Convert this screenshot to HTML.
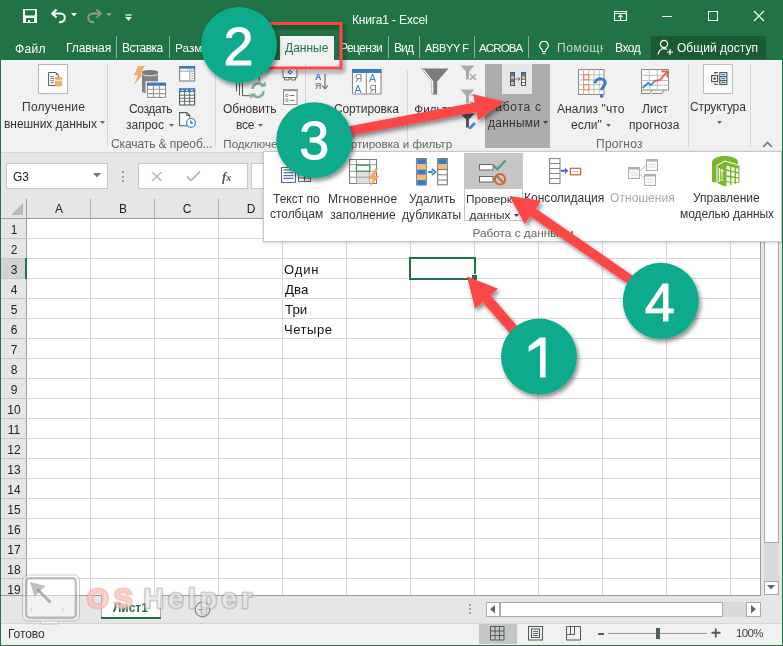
<!DOCTYPE html>
<html><head><meta charset="utf-8"><style>
html,body{margin:0;padding:0;width:783px;height:646px;overflow:hidden;}
body{position:relative;font-family:"Liberation Sans",sans-serif;}
div{position:absolute;}
.t{white-space:nowrap;will-change:transform;}
</style></head><body>
<div style="left:0px;top:0px;width:783px;height:646px;background:#217346"></div>
<div style="left:1px;top:60px;width:781px;height:92px;background:#f1f1f1"></div>
<div style="left:1px;top:152px;width:781px;height:1px;background:#d5d5d5"></div>
<div style="left:1px;top:153px;width:781px;height:46px;background:#e6e6e6"></div>
<div style="left:1px;top:199px;width:760px;height:20px;background:#e6e6e6"></div>
<div style="left:27px;top:219px;width:734px;height:376px;background:#fff"></div>
<div style="left:1px;top:219px;width:26px;height:376px;background:#e6e6e6"></div>
<svg style="position:absolute;left:22px;top:8px;" width="16" height="16" viewBox="0 0 16 16"><rect x="1" y="1" width="14" height="14" fill="#fff"/><path d="M3 2.3h10v4.2l-1 1H4l-1-1z" fill="#217346"/><rect x="4" y="10" width="8" height="4" fill="#217346"/><rect x="6" y="12" width="2" height="2" fill="#fff"/></svg>
<svg style="position:absolute;left:50px;top:7px;" width="18" height="17" viewBox="0 0 18 17"><path d="M3 6.5h7.5a4.3 4.3 0 0 1 0 8.6h-1.5" fill="none" stroke="#fff" stroke-width="2.1"/><path d="M6.5 2.5L2.3 6.5l4.2 4" fill="none" stroke="#fff" stroke-width="2.1"/></svg>
<svg style="position:absolute;left:71px;top:13px;" width="6" height="4" viewBox="0 0 6 4"><path d="M0 0h6L3 3.5z" fill="#fff"/></svg>
<svg style="position:absolute;left:85px;top:7px;" width="18" height="17" viewBox="0 0 18 17"><path d="M15 6.5H7.5a4.3 4.3 0 0 0 0 8.6H9" fill="none" stroke="#8c9a90" stroke-width="2.1"/><path d="M11.5 2.5l4.2 4-4.2 4" fill="none" stroke="#8c9a90" stroke-width="2.1"/></svg>
<svg style="position:absolute;left:106px;top:13px;" width="6" height="4" viewBox="0 0 6 4"><path d="M0 0h6L3 3.5z" fill="#8c9a90"/></svg>
<svg style="position:absolute;left:125px;top:14px;" width="7" height="7" viewBox="0 0 7 7"><path d="M0.5 1h6" stroke="#fff" stroke-width="1.2"/><path d="M0 3h7L3.5 6.8z" fill="#fff"/></svg>
<div class="t" style="left:352.3px;top:14px;font-size:12px;line-height:12px;color:#fff;letter-spacing:-0.154px;">Книга1 - Excel</div>
<svg style="position:absolute;left:613px;top:10px;" width="15" height="12" viewBox="0 0 15 12"><path d="M1.5 1.5h12v9h-12zM1.5 3.5h12" fill="none" stroke="#fff" stroke-width="1.2"/><path d="M7.5 10V5M5.3 7.2l2.2-2.2 2.2 2.2" fill="none" stroke="#fff" stroke-width="1.2"/></svg>
<div style="left:662px;top:16px;width:10px;height:1px;background:#fff"></div>
<div style="left:708px;top:11px;width:10px;height:10px;border:1px solid #fff;box-sizing:border-box"></div>
<svg style="position:absolute;left:753px;top:10px;" width="12" height="12" viewBox="0 0 12 12"><path d="M1 1l10 10M11 1L1 11" stroke="#fff" stroke-width="1.1"/></svg>
<div class="t" style="left:15px;top:43px;font-size:12px;line-height:12px;color:#fff;letter-spacing:0.333px;">Файл</div>
<div class="t" style="left:66px;top:42px;font-size:12px;line-height:12px;color:#fff;letter-spacing:-0.083px;">Главная</div>
<div style="left:116px;top:36px;width:1px;height:22px;background:#8fb29c"></div>
<div style="left:169px;top:36px;width:1px;height:22px;background:#8fb29c"></div>
<div style="left:388px;top:36px;width:1px;height:22px;background:#8fb29c"></div>
<div style="left:419px;top:36px;width:1px;height:22px;background:#8fb29c"></div>
<div style="left:474px;top:36px;width:1px;height:22px;background:#8fb29c"></div>
<div style="left:528px;top:36px;width:1px;height:22px;background:#8fb29c"></div>
<div class="t" style="left:121.5px;top:42px;font-size:12px;line-height:12px;color:#fff;letter-spacing:-0.583px;">Вставка</div>
<div class="t" style="left:174.5px;top:43px;font-size:11.8px;line-height:11.8px;color:#fff;">Размет</div>
<div style="left:280px;top:36px;width:54px;height:24px;background:#f1f1f1"></div>
<div class="t" style="left:285px;top:42px;font-size:12px;line-height:12px;color:#217346;letter-spacing:0.000px;">Данные</div>
<div class="t" style="left:340px;top:42px;font-size:12px;line-height:12px;color:#fff;letter-spacing:-0.600px;">Рецензи</div>
<div class="t" style="left:393.5px;top:42px;font-size:12px;line-height:12px;color:#fff;letter-spacing:-0.900px;">Вид</div>
<div class="t" style="left:424.5px;top:43px;font-size:11px;line-height:11px;color:#fff;letter-spacing:-0.367px;">ABBYY F</div>
<div class="t" style="left:479.2px;top:43px;font-size:11.5px;line-height:11.5px;color:#fff;letter-spacing:-0.860px;">ACROBA</div>
<svg style="position:absolute;left:538px;top:40px;" width="12" height="15" viewBox="0 0 12 15"><path d="M6 1.2a4.3 4.3 0 0 0-2.6 7.7c.6.5.9 1.1.9 1.8v.8h3.4v-.8c0-.7.3-1.3.9-1.8A4.3 4.3 0 0 0 6 1.2z" fill="none" stroke="#fff" stroke-width="1.1"/><path d="M4.3 13.2h3.4" stroke="#fff" stroke-width="1.1"/></svg>
<div class="t" style="left:556.5px;top:42px;font-size:12px;line-height:12px;color:#c9d9cf;width:46px;overflow:hidden;white-space:nowrap;letter-spacing:0.6px">Помощн</div>
<div class="t" style="left:615.4px;top:42px;font-size:12px;line-height:12px;color:#fff;letter-spacing:-0.467px;">Вход</div>
<div style="left:651px;top:36px;width:115px;height:23px;background:#1b5a36"></div>
<svg style="position:absolute;left:657px;top:39px;" width="18" height="17" viewBox="0 0 18 17"><circle cx="7" cy="5" r="3.6" fill="none" stroke="#fff" stroke-width="1.2"/><path d="M1.2 15.5c0-3.3 2.6-5.8 5.8-5.8 1.3 0 2.3.3 3.2.9" fill="none" stroke="#fff" stroke-width="1.2"/><path d="M13 10v6M10 13h6" stroke="#fff" stroke-width="1.2"/></svg>
<div class="t" style="left:677.4px;top:42px;font-size:12px;line-height:12px;color:#fff;letter-spacing:0.036px;">Общий доступ</div>
<div style="left:38px;top:64px;width:30px;height:30px;background:#fcfcfc;border:1px solid #b4b4b4;box-sizing:border-box"></div>
<svg style="position:absolute;left:46px;top:70px;" width="18" height="18" viewBox="0 0 18 18"><path d="M2.6 2.5h7.2l2.6 2.6v10.4H2.6z" fill="#fff" stroke="#4f5f55" stroke-width="1"/><path d="M9.8 2.5v2.6h2.6z" fill="#555"/><path d="M4.3 6.6h3.7M4.3 8.6h3.7M4.3 10.6h3.7M4.3 12.6h3.7" stroke="#777" stroke-width="0.9"/><path d="M9 8.2c0-.9 1.6-1.4 3.6-1.4s3.6.5 3.6 1.4v7.4c0 .7-1.6 1.1-3.6 1.1S9 16.3 9 15.6z" fill="#ecb071"/><path d="M9 9.6c.5.6 1.9.9 3.6.9s3.1-.3 3.6-.9" fill="none" stroke="#fff" stroke-width="0.9"/></svg>
<div class="t" style="left:22px;top:101px;font-size:12px;line-height:12px;color:#363636;letter-spacing:0.250px;">Получение</div>
<div class="t" style="left:3.5999999999999996px;top:118px;font-size:12px;line-height:12px;color:#363636;letter-spacing:-0.046px;">внешних данных</div>
<svg style="position:absolute;left:100px;top:121px;" width="5" height="3" viewBox="0 0 5 3"><path d="M0 0h5L2.5 3z" fill="#666"/></svg>
<div style="left:107px;top:64px;width:1px;height:83px;background:#d5d5d5"></div>
<svg style="position:absolute;left:132px;top:64px;" width="36" height="36" viewBox="0 0 36 36"><path d="M6.2 2h6.5L8.6 9.8h3.1L1.9 21l4.1-9.7H1.9z" fill="#efac62"/><path d="M10 8.2v19c0 1.3 3.6 2.3 8 2.3s8-1 8-2.3v-19z" fill="#828282"/><ellipse cx="18" cy="8.2" rx="8" ry="2.3" fill="#7a7a7a"/><path d="M10.2 10.2c1 1 4.2 1.6 7.8 1.6s6.8-.6 7.8-1.6" fill="none" stroke="#e8e8e8" stroke-width="1"/><rect x="13.6" y="17.4" width="21.8" height="17.8" fill="#fff"/><rect x="15.4" y="19.2" width="18.2" height="14.2" fill="#fff" stroke="#8a8a8a" stroke-width="1.1"/><rect x="14.9" y="18.7" width="19.2" height="3.1" fill="#3a7cc2"/><path d="M15.4 25.3h18.2M15.4 29.6h18.2M21.4 21.8v11.6M27.6 21.8v11.6" stroke="#9a9a9a" stroke-width="1.1"/></svg>
<div class="t" style="left:128.6px;top:103px;font-size:12px;line-height:12px;color:#363636;letter-spacing:-0.367px;">Создать</div>
<div class="t" style="left:126px;top:119px;font-size:12px;line-height:12px;color:#363636;letter-spacing:0.000px;">запрос</div>
<svg style="position:absolute;left:169px;top:123.5px;" width="5" height="3" viewBox="0 0 5 3"><path d="M0 0h5L2.5 3z" fill="#666"/></svg>
<svg style="position:absolute;left:179px;top:65px;" width="17" height="17" viewBox="0 0 17 17"><rect x="0.6" y="1.6" width="15" height="14.4" fill="#fff" stroke="#808080" stroke-width="1.1"/><rect x="0" y="1" width="16.2" height="2.7" fill="#3a7cc2"/><path d="M0.6 6.2h15M10.8 6.2v9.8" stroke="#a0a0a0" stroke-width="1"/><path d="M8 4.9h1M10 4.9h1M12 4.9h1M14 4.9h1" stroke="#888" stroke-width="0.9"/><path d="M12.3 8.6h2M12.3 11h2M12.3 13.4h2" stroke="#888" stroke-width="0.9"/></svg>
<svg style="position:absolute;left:179px;top:88px;" width="17" height="18" viewBox="0 0 17 18"><rect x="0.6" y="1" width="15" height="16" fill="#fff" stroke="#4f5f55" stroke-width="1.1"/><rect x="0" y="0.5" width="16.2" height="3.6" fill="#3a7cc2"/><path d="M2.3 2.3h2.2M7 2.3h2.2M11.7 2.3h2.2" stroke="#fff" stroke-width="1"/><path d="M0.6 7.2h15M0.6 10.3h15M0.6 13.3h15M5.6 4v13M10.7 4v13" stroke="#4f5f55" stroke-width="0.9"/></svg>
<svg style="position:absolute;left:179px;top:111px;" width="18" height="17" viewBox="0 0 18 17"><path d="M0.6 1.6h7.2l3 3v10.2H0.6z" fill="#fff" stroke="#4f5f55" stroke-width="1.1"/><path d="M7.8 1.6v3h3" fill="none" stroke="#4f5f55" stroke-width="1"/><circle cx="12" cy="11.9" r="4.4" fill="#fff" stroke="#3a8ad0" stroke-width="1.2"/><path d="M11.9 9.5v2.6h2" fill="none" stroke="#333" stroke-width="1"/></svg>
<div class="t" style="left:110.6px;top:138px;font-size:12px;line-height:12px;color:#5e6a62;letter-spacing:-0.094px;">Скачать &amp; преоб...</div>
<div style="left:215px;top:64px;width:1px;height:83px;background:#d5d5d5"></div>
<svg style="position:absolute;left:230px;top:76px;" width="38" height="24" viewBox="0 0 38 24"><path d="M6.5 7v8.5M9.5 7v12.5M12.5 7v12.7h7.5M29.2 1v4.5" fill="none" stroke="#555" stroke-width="1"/><path d="M22.6 13a5.6 5.6 0 0 1 10.3-3" fill="none" stroke="#7fb09b" stroke-width="2.6"/><path d="M33.4 15.3a5.6 5.6 0 0 1-10.2 3.2" fill="none" stroke="#7fb09b" stroke-width="2.6"/><path d="M30 10.8h5.6V5.2zM26 17.6h-5.6v5.6z" fill="#7fb09b"/></svg>
<div class="t" style="left:222.5px;top:103px;font-size:12px;line-height:12px;color:#363636;letter-spacing:-0.129px;">Обновить</div>
<div class="t" style="left:235.6px;top:119px;font-size:12px;line-height:12px;color:#363636;letter-spacing:-0.300px;">все</div>
<svg style="position:absolute;left:258px;top:123.5px;" width="5" height="3" viewBox="0 0 5 3"><path d="M0 0h5L2.5 3z" fill="#666"/></svg>
<svg style="position:absolute;left:282px;top:64px;" width="16" height="17" viewBox="0 0 16 17"><path d="M1 3.5h14v10H1z" fill="#fff" stroke="#666"/><path d="M2.5 13.5v2.5h4.5v-2.5M9 13.5v2.5h4.5v-2.5" fill="none" stroke="#666"/><path d="M8 5.5l2.6 2.6L8 10.7 5.4 8.1z" fill="#1f6fb8"/><circle cx="8" cy="8.1" r="1" fill="#fff"/></svg>
<svg style="position:absolute;left:283px;top:89px;" width="15" height="16" viewBox="0 0 15 16"><rect x="0.5" y="0.5" width="13.5" height="15" fill="#fff" stroke="#888"/><rect x="0" y="0" width="14.5" height="2.2" fill="#999"/><circle cx="3.8" cy="6.5" r="1.3" fill="none" stroke="#777" stroke-width="0.9"/><circle cx="3.8" cy="11.3" r="1.3" fill="none" stroke="#777" stroke-width="0.9"/><path d="M6.8 6.5h4.7M6.8 11.3h4.7" stroke="#777" stroke-width="1"/></svg>
<div class="t" style="left:160.00px;top:138px;width:200px;text-align:center;font-size:11.6px;line-height:11.6px;color:#5e6a62;">Подключения</div>
<div style="left:305px;top:64px;width:1px;height:83px;background:#d5d5d5"></div>
<svg style="position:absolute;left:313px;top:72px;" width="16" height="19" viewBox="0 0 16 19"><text x="2" y="8" font-family="Liberation Sans" font-size="9" font-weight="bold" fill="#3d7bc4">A</text><text x="2" y="16.5" font-family="Liberation Sans" font-size="9" font-weight="bold" fill="#888">Я</text><path d="M12 2v15M9 13.5l3 3.5 3-3.5" fill="none" stroke="#5b6b60" stroke-width="1.1"/></svg>
<svg style="position:absolute;left:351px;top:68px;" width="31" height="27" viewBox="0 0 31 27"><rect x="1.5" y="1.5" width="28.5" height="24.5" rx="0.8" fill="#fff" stroke="#888" stroke-width="1.1"/><rect x="1" y="1" width="29.5" height="4" fill="#3a7cc2"/><path d="M15.3 5v21" stroke="#888" stroke-width="1.1"/><g font-family="Liberation Sans" font-size="10.5"><text x="3.8" y="14" fill="#808080">Я</text><text x="3.5" y="24.5" fill="#2f7fd0">A</text><text x="18" y="14" fill="#2f7fd0">A</text><text x="18.2" y="24.5" fill="#808080">Я</text></g></svg>
<div class="t" style="left:334px;top:103px;font-size:12px;line-height:12px;color:#363636;letter-spacing:-0.111px;">Сортировка</div>
<div style="left:407px;top:70px;width:1px;height:71px;background:#d5d5d5"></div>
<svg style="position:absolute;left:420px;top:68px;" width="30" height="28" viewBox="0 0 30 28"><path d="M1 0.5h27.5L17.2 13.6v13h-5.6v-13z" fill="#7c7c7c"/><path d="M3.3 1.6l9.4 12.1v12" fill="none" stroke="#fff" stroke-width="1.2"/></svg>
<div class="t" style="left:334.00px;top:103px;width:200px;text-align:center;font-size:11.7px;line-height:11.7px;color:#363636;">Фильтр</div>
<svg style="position:absolute;left:460px;top:65px;" width="18" height="17" viewBox="0 0 18 17"><path d="M0.5 0.5h14l-5.5 6v8h-3v-8z" fill="#aaa"/><path d="M10 9l6 6M16 9l-6 6" stroke="#aaa" stroke-width="1.6"/></svg>
<svg style="position:absolute;left:460px;top:89px;" width="18" height="17" viewBox="0 0 18 17"><path d="M0.5 0.5h14l-5.5 6v8h-3v-8z" fill="#aaa"/><path d="M11 7a4 4 0 1 1 -1 5" fill="none" stroke="#aaa" stroke-width="1.5"/></svg>
<svg style="position:absolute;left:460px;top:113px;" width="18" height="16" viewBox="0 0 18 16"><path d="M0.5 0.5h14l-5.5 6v8h-3v-8z" fill="#555"/><path d="M8 15l6-6 2 2-6 6z" fill="#3d8ad0"/></svg>
<div class="t" style="left:294.00px;top:138px;width:200px;text-align:center;font-size:11.6px;line-height:11.6px;color:#5e6a62;">Сортировка и фильтр</div>
<div style="left:485px;top:64px;width:65px;height:84px;background:#adadad"></div>
<div style="left:502px;top:64px;width:30px;height:30px;background:#e6e6e6"></div>
<svg style="position:absolute;left:510px;top:72px;" width="16" height="14" viewBox="0 0 16 14"><rect x="0.5" y="0.5" width="4" height="13" fill="#fff" stroke="#4f5f55"/><rect x="1" y="1" width="3" height="3" fill="#3d7bc4"/><rect x="1" y="4" width="3" height="3" fill="#f0b470"/><rect x="1" y="7" width="3" height="3" fill="#3d7bc4"/><rect x="1" y="10" width="3" height="3" fill="#f0b470"/><rect x="11.5" y="0.5" width="4" height="13" fill="#fff" stroke="#4f5f55"/><rect x="12" y="1" width="3" height="3" fill="#3d7bc4"/><rect x="12" y="4" width="3" height="3" fill="#f0b470"/><path d="M12 7.5h3M12 10.5h3" stroke="#4f5f55" stroke-width="0.8"/><path d="M5.5 7h4.5M8.3 5.3L10 7 8.3 8.7" fill="none" stroke="#3d7bc4" stroke-width="1"/></svg>
<div class="t" style="left:486.5px;top:101px;font-size:12px;line-height:12px;color:#363636;letter-spacing:0.729px;">Работа с</div>
<div class="t" style="left:487.5px;top:117px;font-size:12px;line-height:12px;color:#363636;letter-spacing:0.250px;">данными</div>
<svg style="position:absolute;left:543px;top:120.5px;" width="5" height="3" viewBox="0 0 5 3"><path d="M0 0h5L2.5 3z" fill="#444"/></svg>
<svg style="position:absolute;left:577px;top:68px;" width="32" height="32" viewBox="0 0 32 32"><rect x="1.5" y="1.5" width="25.5" height="25" fill="#fff" stroke="#888"/><path d="M6.5 1.5v25M11.8 1.5v25M17 1.5v25M22.2 1.5v25M1.5 6.8h25.5M1.5 12h25.5M1.5 16.8h25.5M1.5 21.4h25.5" stroke="#bdbdbd"/><rect x="6.8" y="6.8" width="5" height="5" fill="#fff" stroke="#e07b40"/><rect x="6.8" y="16.8" width="5" height="5" fill="#fff" stroke="#e07b40"/><path d="M18.3 15.3c0-2.9 2.3-4.6 5-4.6s5 1.7 5 4.4c0 3.2-3.6 3.4-3.6 7.2" fill="none" stroke="#3a7cc2" stroke-width="3"/><rect x="23" y="26.3" width="3.4" height="3.4" fill="#3a7cc2"/></svg>
<div class="t" style="left:557px;top:103px;font-size:12px;line-height:12px;color:#363636;letter-spacing:0.100px;">Анализ "что</div>
<div class="t" style="left:571.3px;top:119px;font-size:12px;line-height:12px;color:#363636;letter-spacing:0.050px;">если"</div>
<svg style="position:absolute;left:605.5px;top:123.5px;" width="5" height="3" viewBox="0 0 5 3"><path d="M0 0h5L2.5 3z" fill="#666"/></svg>
<svg style="position:absolute;left:640px;top:68px;" width="30" height="28" viewBox="0 0 30 28"><rect x="1.5" y="1.5" width="27" height="20.5" fill="#fff" stroke="#888"/><path d="M9.3 1.5v20.5M17.3 1.5v20.5M1.5 7.3h27M1.5 12.5h27M1.5 17.2h27" stroke="#bdbdbd"/><path d="M1.5 22v3.5h8.5l2.5-3.5M12.5 25.5h9.5l2.5-3.5" fill="none" stroke="#888"/><path d="M2.5 20l5.5-5 3 2 3.5-4" fill="none" stroke="#3a8ad0" stroke-width="1.8"/><path d="M14.5 13l5.5-1 6.8-8" fill="none" stroke="#d9623a" stroke-width="1.8"/><path d="M21.5 3.3h6v6" fill="none" stroke="#d9623a" stroke-width="1.8"/></svg>
<div class="t" style="left:642px;top:103px;font-size:12px;line-height:12px;color:#363636;letter-spacing:0.000px;">Лист</div>
<div class="t" style="left:628.7px;top:119px;font-size:12px;line-height:12px;color:#363636;letter-spacing:0.114px;">прогноза</div>
<div class="t" style="left:595.5px;top:138px;font-size:12px;line-height:12px;color:#5e6a62;letter-spacing:0.250px;">Прогноз</div>
<div style="left:688px;top:64px;width:1px;height:83px;background:#d5d5d5"></div>
<div style="left:703px;top:64px;width:30px;height:30px;background:#fcfcfc;border:1px solid #bdbdbd;box-sizing:border-box"></div>
<svg style="position:absolute;left:710px;top:71px;" width="18" height="15" viewBox="0 0 18 15"><g fill="none" stroke="#4f5f55" stroke-width="1.2"><rect x="1.6" y="4.6" width="6" height="6"/><path d="M3.2 7.6h2.8M4.6 6.2v2.8"/><path d="M4.8 2.8V1.6H8M4.8 12.2v1.3H8"/><rect x="9.8" y="1.6" width="7" height="11.9"/><path d="M9.8 5.6h7M9.8 9.6h7"/></g><path d="M11.4 3.6h3.8M11.4 7.6h3.8M11.4 11.6h3.8" stroke="#3a7cc2" stroke-width="1.1"/></svg>
<div class="t" style="left:690.4px;top:101px;font-size:12px;line-height:12px;color:#363636;letter-spacing:-0.138px;">Структура</div>
<svg style="position:absolute;left:717px;top:121px;" width="5" height="3" viewBox="0 0 5 3"><path d="M0 0h5L2.5 3z" fill="#666"/></svg>
<div style="left:750px;top:64px;width:1px;height:83px;background:#d5d5d5"></div>
<svg style="position:absolute;left:762px;top:141px;" width="11" height="7" viewBox="0 0 11 7"><path d="M1 6l4.5-4.5L10 6" fill="none" stroke="#777" stroke-width="1.6"/></svg>
<div style="left:6px;top:163px;width:102px;height:26px;background:#fff;border:1px solid #c6c6c6;box-sizing:border-box"></div>
<div class="t" style="left:13px;top:171px;font-size:12px;line-height:12px;color:#222;">G3</div>
<svg style="position:absolute;left:93px;top:173px;" width="9" height="5" viewBox="0 0 9 5"><path d="M0 0h8L4 4.5z" fill="#777"/></svg>
<div style="left:122px;top:171px;width:2px;height:2px;background:#a0a0a0"></div>
<div style="left:122px;top:175.5px;width:2px;height:2px;background:#a0a0a0"></div>
<div style="left:122px;top:180px;width:2px;height:2px;background:#a0a0a0"></div>
<div style="left:138px;top:163px;width:110px;height:26px;background:#fff;border:1px solid #c6c6c6;box-sizing:border-box"></div>
<svg style="position:absolute;left:151px;top:171px;" width="12" height="11" viewBox="0 0 12 11"><path d="M1 1l9.5 9M10.5 1L1 10" stroke="#b8b8b8" stroke-width="1.4"/></svg>
<svg style="position:absolute;left:186px;top:170px;" width="15" height="12" viewBox="0 0 15 12"><path d="M1 6.5l4 4L14 1.5" fill="none" stroke="#b8b8b8" stroke-width="1.8"/></svg>
<div class="t" style="left:222px;top:170px;font-size:13px;line-height:13px;color:#555;font-family:'Liberation Serif',serif;font-weight:bold"><i>f</i><span style="font-size:10px"><i>x</i></span></div>
<div style="left:251px;top:163px;width:520px;height:26px;background:#fff;border:1px solid #c6c6c6;box-sizing:border-box"></div>
<div style="left:90px;top:199px;width:1px;height:19px;background:#ababab"></div>
<div style="left:90px;top:219px;width:1px;height:376px;background:#d9d9d9"></div>
<div style="left:154px;top:199px;width:1px;height:19px;background:#ababab"></div>
<div style="left:154px;top:219px;width:1px;height:376px;background:#d9d9d9"></div>
<div style="left:218px;top:199px;width:1px;height:19px;background:#ababab"></div>
<div style="left:218px;top:219px;width:1px;height:376px;background:#d9d9d9"></div>
<div style="left:282px;top:199px;width:1px;height:19px;background:#ababab"></div>
<div style="left:282px;top:219px;width:1px;height:376px;background:#d9d9d9"></div>
<div style="left:346px;top:199px;width:1px;height:19px;background:#ababab"></div>
<div style="left:346px;top:219px;width:1px;height:376px;background:#d9d9d9"></div>
<div style="left:410px;top:199px;width:1px;height:19px;background:#ababab"></div>
<div style="left:410px;top:219px;width:1px;height:376px;background:#d9d9d9"></div>
<div style="left:474px;top:199px;width:1px;height:19px;background:#ababab"></div>
<div style="left:474px;top:219px;width:1px;height:376px;background:#d9d9d9"></div>
<div style="left:538px;top:199px;width:1px;height:19px;background:#ababab"></div>
<div style="left:538px;top:219px;width:1px;height:376px;background:#d9d9d9"></div>
<div style="left:602px;top:199px;width:1px;height:19px;background:#ababab"></div>
<div style="left:602px;top:219px;width:1px;height:376px;background:#d9d9d9"></div>
<div style="left:666px;top:199px;width:1px;height:19px;background:#ababab"></div>
<div style="left:666px;top:219px;width:1px;height:376px;background:#d9d9d9"></div>
<div style="left:730px;top:199px;width:1px;height:19px;background:#ababab"></div>
<div style="left:730px;top:219px;width:1px;height:376px;background:#d9d9d9"></div>
<div class="t" style="left:39.00px;top:203px;width:40px;text-align:center;font-size:12px;line-height:12px;color:#222;">A</div>
<div class="t" style="left:103.00px;top:203px;width:40px;text-align:center;font-size:12px;line-height:12px;color:#222;">B</div>
<div class="t" style="left:167.00px;top:203px;width:40px;text-align:center;font-size:12px;line-height:12px;color:#222;">C</div>
<div class="t" style="left:231.00px;top:203px;width:40px;text-align:center;font-size:12px;line-height:12px;color:#222;">D</div>
<div class="t" style="left:295.00px;top:203px;width:40px;text-align:center;font-size:12px;line-height:12px;color:#222;">E</div>
<div class="t" style="left:359.00px;top:203px;width:40px;text-align:center;font-size:12px;line-height:12px;color:#222;">F</div>
<div class="t" style="left:423.00px;top:203px;width:40px;text-align:center;font-size:12px;line-height:12px;color:#222;">G</div>
<div class="t" style="left:487.00px;top:203px;width:40px;text-align:center;font-size:12px;line-height:12px;color:#222;">H</div>
<div class="t" style="left:551.00px;top:203px;width:40px;text-align:center;font-size:12px;line-height:12px;color:#222;">I</div>
<div class="t" style="left:615.00px;top:203px;width:40px;text-align:center;font-size:12px;line-height:12px;color:#222;">J</div>
<div class="t" style="left:679.00px;top:203px;width:40px;text-align:center;font-size:12px;line-height:12px;color:#222;">K</div>
<div style="left:1px;top:218px;width:760px;height:1px;background:#9b9b9b"></div>
<div style="left:26px;top:199px;width:1px;height:396px;background:#9b9b9b"></div>
<div style="left:27px;top:238px;width:734px;height:1px;background:#d9d9d9"></div>
<div style="left:1px;top:238px;width:26px;height:1px;background:#c6c6c6"></div>
<div class="t" style="left:-1.00px;top:224px;width:30px;text-align:center;font-size:12px;line-height:12px;color:#222;">1</div>
<div style="left:27px;top:258px;width:734px;height:1px;background:#d9d9d9"></div>
<div style="left:1px;top:258px;width:26px;height:1px;background:#c6c6c6"></div>
<div class="t" style="left:-1.00px;top:244px;width:30px;text-align:center;font-size:12px;line-height:12px;color:#222;">2</div>
<div style="left:27px;top:278px;width:734px;height:1px;background:#d9d9d9"></div>
<div style="left:1px;top:278px;width:26px;height:1px;background:#c6c6c6"></div>
<div class="t" style="left:-1.00px;top:264px;width:30px;text-align:center;font-size:12px;line-height:12px;color:#222;">3</div>
<div style="left:27px;top:298px;width:734px;height:1px;background:#d9d9d9"></div>
<div style="left:1px;top:298px;width:26px;height:1px;background:#c6c6c6"></div>
<div class="t" style="left:-1.00px;top:284px;width:30px;text-align:center;font-size:12px;line-height:12px;color:#222;">4</div>
<div style="left:27px;top:318px;width:734px;height:1px;background:#d9d9d9"></div>
<div style="left:1px;top:318px;width:26px;height:1px;background:#c6c6c6"></div>
<div class="t" style="left:-1.00px;top:304px;width:30px;text-align:center;font-size:12px;line-height:12px;color:#222;">5</div>
<div style="left:27px;top:338px;width:734px;height:1px;background:#d9d9d9"></div>
<div style="left:1px;top:338px;width:26px;height:1px;background:#c6c6c6"></div>
<div class="t" style="left:-1.00px;top:324px;width:30px;text-align:center;font-size:12px;line-height:12px;color:#222;">6</div>
<div style="left:27px;top:358px;width:734px;height:1px;background:#d9d9d9"></div>
<div style="left:1px;top:358px;width:26px;height:1px;background:#c6c6c6"></div>
<div class="t" style="left:-1.00px;top:344px;width:30px;text-align:center;font-size:12px;line-height:12px;color:#222;">7</div>
<div style="left:27px;top:378px;width:734px;height:1px;background:#d9d9d9"></div>
<div style="left:1px;top:378px;width:26px;height:1px;background:#c6c6c6"></div>
<div class="t" style="left:-1.00px;top:364px;width:30px;text-align:center;font-size:12px;line-height:12px;color:#222;">8</div>
<div style="left:27px;top:398px;width:734px;height:1px;background:#d9d9d9"></div>
<div style="left:1px;top:398px;width:26px;height:1px;background:#c6c6c6"></div>
<div class="t" style="left:-1.00px;top:384px;width:30px;text-align:center;font-size:12px;line-height:12px;color:#222;">9</div>
<div style="left:27px;top:418px;width:734px;height:1px;background:#d9d9d9"></div>
<div style="left:1px;top:418px;width:26px;height:1px;background:#c6c6c6"></div>
<div class="t" style="left:-1.00px;top:404px;width:30px;text-align:center;font-size:12px;line-height:12px;color:#222;">10</div>
<div style="left:27px;top:438px;width:734px;height:1px;background:#d9d9d9"></div>
<div style="left:1px;top:438px;width:26px;height:1px;background:#c6c6c6"></div>
<div class="t" style="left:-1.00px;top:424px;width:30px;text-align:center;font-size:12px;line-height:12px;color:#222;">11</div>
<div style="left:27px;top:458px;width:734px;height:1px;background:#d9d9d9"></div>
<div style="left:1px;top:458px;width:26px;height:1px;background:#c6c6c6"></div>
<div class="t" style="left:-1.00px;top:444px;width:30px;text-align:center;font-size:12px;line-height:12px;color:#222;">12</div>
<div style="left:27px;top:478px;width:734px;height:1px;background:#d9d9d9"></div>
<div style="left:1px;top:478px;width:26px;height:1px;background:#c6c6c6"></div>
<div class="t" style="left:-1.00px;top:464px;width:30px;text-align:center;font-size:12px;line-height:12px;color:#222;">13</div>
<div style="left:27px;top:498px;width:734px;height:1px;background:#d9d9d9"></div>
<div style="left:1px;top:498px;width:26px;height:1px;background:#c6c6c6"></div>
<div class="t" style="left:-1.00px;top:484px;width:30px;text-align:center;font-size:12px;line-height:12px;color:#222;">14</div>
<div style="left:27px;top:518px;width:734px;height:1px;background:#d9d9d9"></div>
<div style="left:1px;top:518px;width:26px;height:1px;background:#c6c6c6"></div>
<div class="t" style="left:-1.00px;top:504px;width:30px;text-align:center;font-size:12px;line-height:12px;color:#222;">15</div>
<div style="left:27px;top:538px;width:734px;height:1px;background:#d9d9d9"></div>
<div style="left:1px;top:538px;width:26px;height:1px;background:#c6c6c6"></div>
<div class="t" style="left:-1.00px;top:524px;width:30px;text-align:center;font-size:12px;line-height:12px;color:#222;">16</div>
<div style="left:27px;top:558px;width:734px;height:1px;background:#d9d9d9"></div>
<div style="left:1px;top:558px;width:26px;height:1px;background:#c6c6c6"></div>
<div class="t" style="left:-1.00px;top:544px;width:30px;text-align:center;font-size:12px;line-height:12px;color:#222;">17</div>
<div style="left:27px;top:578px;width:734px;height:1px;background:#d9d9d9"></div>
<div style="left:1px;top:578px;width:26px;height:1px;background:#c6c6c6"></div>
<div class="t" style="left:-1.00px;top:564px;width:30px;text-align:center;font-size:12px;line-height:12px;color:#222;">18</div>
<div class="t" style="left:-1.00px;top:584px;width:30px;text-align:center;font-size:12px;line-height:12px;color:#222;">19</div>
<div style="left:1px;top:259px;width:25px;height:19px;background:#d2d2d2"></div>
<div style="left:25px;top:258px;width:2px;height:21px;background:#217346"></div>
<div class="t" style="left:-1.00px;top:264px;width:30px;text-align:center;font-size:12px;line-height:12px;color:#222;">3</div>
<svg style="position:absolute;left:11px;top:203px;" width="13" height="12" viewBox="0 0 13 12"><path d="M12 0v12H0z" fill="#b8b8b8"/></svg>
<div class="t" style="left:284.3px;top:263px;font-size:13px;line-height:13px;color:#111;letter-spacing:0.900px;">Один</div>
<div class="t" style="left:285.3px;top:283px;font-size:13.3px;line-height:13.3px;color:#111;">Два</div>
<div class="t" style="left:285.3px;top:303px;font-size:13.3px;line-height:13.3px;color:#111;">Три</div>
<div class="t" style="left:284.3px;top:323px;font-size:13px;line-height:13px;color:#111;letter-spacing:0.540px;">Четыре</div>
<div style="left:409px;top:257px;width:67px;height:23px;border:2px solid #217346;box-sizing:border-box"></div>
<div style="left:472px;top:275px;width:5px;height:5px;background:#217346;border:1px solid #fff;box-sizing:content-box;left:471px;top:274px"></div>
<div style="left:760px;top:199px;width:1px;height:396px;background:#9b9b9b"></div>
<div style="left:761px;top:199px;width:21px;height:396px;background:#e6e6e6"></div>
<div style="left:764px;top:199px;width:15px;height:344px;background:#fff;border:1px solid #ababab;box-sizing:border-box"></div>
<div style="left:764px;top:543px;width:15px;height:38px;background:#dadada"></div>
<div style="left:764px;top:581px;width:15px;height:14px;background:#fff;border:1px solid #ababab;box-sizing:border-box"></div>
<svg style="position:absolute;left:767px;top:585px;" width="9" height="5" viewBox="0 0 9 5"><path d="M0 0h8L4 4.5z" fill="#666"/></svg>
<div style="left:1px;top:595px;width:781px;height:28px;background:#e6e6e6"></div>
<div style="left:1px;top:595px;width:760px;height:1px;background:#9b9b9b"></div>
<div style="left:101px;top:595px;width:60px;height:24px;background:#fff;border-left:1px solid #ababab;border-right:1px solid #ababab;box-sizing:border-box"></div>
<div style="left:101px;top:617px;width:60px;height:2px;background:#217346"></div>
<div class="t" style="left:113px;top:602px;font-size:12px;line-height:12px;color:#217346;font-weight:bold;letter-spacing:-0.050px;">Лист1</div>
<svg style="position:absolute;left:194px;top:601px;" width="17" height="17" viewBox="0 0 17 17"><circle cx="8.5" cy="8.5" r="7.3" fill="none" stroke="#888" stroke-width="1.2"/><path d="M8.5 4.5v8M4.5 8.5h8" stroke="#888" stroke-width="1.2"/></svg>
<div style="left:469px;top:604px;width:2px;height:2px;background:#a0a0a0"></div>
<div style="left:469px;top:608px;width:2px;height:2px;background:#a0a0a0"></div>
<div style="left:469px;top:612px;width:2px;height:2px;background:#a0a0a0"></div>
<div style="left:486px;top:602px;width:14px;height:15px;background:#fff;border:1px solid #ababab;box-sizing:border-box"></div>
<svg style="position:absolute;left:490px;top:605px;" width="6" height="9" viewBox="0 0 6 9"><path d="M5 0v8.5L0 4.25z" fill="#666"/></svg>
<div style="left:500px;top:602px;width:223px;height:15px;background:#fff;border:1px solid #ababab;box-sizing:border-box"></div>
<div style="left:723px;top:602px;width:23px;height:15px;background:#dadada"></div>
<div style="left:746px;top:602px;width:15px;height:15px;background:#fff;border:1px solid #ababab;box-sizing:border-box"></div>
<svg style="position:absolute;left:751px;top:605px;" width="6" height="9" viewBox="0 0 6 9"><path d="M0 0v8.5l5-4.25z" fill="#666"/></svg>
<div style="left:1px;top:623px;width:781px;height:22px;background:#f1f1f1"></div>
<div style="left:1px;top:623px;width:781px;height:1px;background:#d5d5d5"></div>
<div class="t" style="left:8px;top:628px;font-size:12px;line-height:12px;color:#333;letter-spacing:-0.100px;">Готово</div>
<div style="left:479px;top:624px;width:38px;height:20px;background:#c6c6c6"></div>
<svg style="position:absolute;left:490px;top:626px;" width="15" height="15" viewBox="0 0 15 15"><rect x="0.5" y="0.5" width="13.5" height="13.5" fill="none" stroke="#4f5f55"/><path d="M5 0.5v13.5M9.5 0.5v13.5M0.5 5h13.5M0.5 9.5h13.5" stroke="#4f5f55"/></svg>
<svg style="position:absolute;left:528px;top:626px;" width="16" height="15" viewBox="0 0 16 15"><rect x="0.5" y="0.5" width="14" height="13.5" fill="none" stroke="#4f5f55"/><rect x="3.5" y="3" width="8" height="8.5" fill="none" stroke="#4f5f55"/><path d="M5 5.5h5M5 7.5h5M5 9.5h5" stroke="#4f5f55" stroke-width="0.9"/></svg>
<svg style="position:absolute;left:566px;top:626px;" width="16" height="15" viewBox="0 0 16 15"><path d="M0.5 14V0.5h14V14zM0.5 8.5h8V0.5M4.5 0.5v8" fill="none" stroke="#4f5f55"/></svg>
<div style="left:598px;top:633px;width:6px;height:2px;background:#4f5f55"></div>
<div style="left:608px;top:633px;width:99px;height:1px;background:#999"></div>
<div style="left:656px;top:628px;width:4px;height:11px;background:#4f5f55"></div>
<svg style="position:absolute;left:711px;top:628px;" width="10" height="10" viewBox="0 0 10 10"><path d="M4.75 0.5v9M0.5 4.75h9" stroke="#4f5f55" stroke-width="1.8"/></svg>
<div class="t" style="left:735.6px;top:628px;font-size:11.5px;line-height:11.5px;color:#444;letter-spacing:-0.667px;">100%</div>
<div style="left:0px;top:645px;width:783px;height:1px;background:#217346"></div>
<div style="left:0px;top:60px;width:1px;height:586px;background:#217346"></div>
<div style="left:782px;top:60px;width:1px;height:586px;background:#217346"></div>
<div style="left:263px;top:151px;width:519px;height:91px;background:#fff;border:1px solid #c8c8c8;box-sizing:border-box;box-shadow:0 1px 3px rgba(0,0,0,0.18)"></div>
<svg style="position:absolute;left:280px;top:166px;" width="32" height="18" viewBox="0 0 32 18"><rect x="1.5" y="1.5" width="14" height="15" fill="#fff" stroke="#666"/><path d="M3.5 4h10M3.5 6.8h10" stroke="#2f6b45" stroke-width="1.1"/><path d="M3.5 9.6h10M3.5 12.4h10" stroke="#3d7bc4" stroke-width="1.1"/><rect x="18.5" y="8.5" width="12" height="7" fill="#fff" stroke="#666"/><path d="M24.5 8.5v7M18.5 12h12" stroke="#666"/></svg>
<div class="t" style="left:273.3px;top:193px;font-size:12px;line-height:12px;color:#363636;letter-spacing:0.000px;">Текст по</div>
<div class="t" style="left:269.7px;top:208px;font-size:12px;line-height:12px;color:#363636;letter-spacing:-0.043px;">столбцам</div>
<svg style="position:absolute;left:348px;top:157px;" width="34" height="32" viewBox="0 0 34 32"><rect x="1.5" y="2.5" width="27" height="24" fill="#fff" stroke="#777"/><rect x="8.5" y="14.3" width="13.2" height="12.2" fill="#e0e0e0"/><path d="M8.5 2.5v24M21.7 2.5v24M1.5 7.7h27M1.5 14.3h27M1.5 20.2h27" stroke="#999"/><rect x="8.5" y="8.2" width="13.2" height="6" fill="#fff" stroke="#3c8c5c" stroke-width="1.2"/><path d="M27.5 11.5L20 22.2h4.6l-3.2 8.3 9.9-11.6h-4.6l3.3-7.4z" fill="#efaa5a"/></svg>
<div class="t" style="left:328px;top:193px;font-size:12px;line-height:12px;color:#363636;letter-spacing:0.222px;">Мгновенное</div>
<div class="t" style="left:263.00px;top:209px;width:200px;text-align:center;font-size:12px;line-height:12px;color:#363636;">заполнение</div>
<svg style="position:absolute;left:415px;top:157px;" width="34" height="29" viewBox="0 0 34 29"><rect x="1.7" y="1.6" width="9.6" height="26.2" fill="#fff" stroke="#777" stroke-width="1.1"/><rect x="2.2" y="2.10" width="8.6" height="5.24" fill="#3a7cc2"/><rect x="2.2" y="7.34" width="8.6" height="5.24" fill="#f2b77a"/><rect x="2.2" y="12.58" width="8.6" height="5.24" fill="#3a7cc2"/><rect x="2.2" y="17.82" width="8.6" height="5.24" fill="#f2b77a"/><rect x="2.2" y="23.06" width="8.6" height="5.24" fill="#3a7cc2"/><rect x="22.7" y="1.6" width="9.6" height="26.2" fill="#fff" stroke="#777" stroke-width="1.1"/><rect x="23.2" y="2.10" width="8.6" height="5.24" fill="#3a7cc2"/><rect x="23.2" y="7.34" width="8.6" height="5.24" fill="#f2b77a"/><path d="M22.7 12.58h9.6" stroke="#777" stroke-width="1"/><path d="M22.7 17.82h9.6" stroke="#777" stroke-width="1"/><path d="M22.7 23.06h9.6" stroke="#777" stroke-width="1"/><path d="M13.2 15h4.5" stroke="#3a7cc2" stroke-width="2.2"/><path d="M16.8 11.8l3.8 3.2-3.8 3.2" fill="none" stroke="#3a7cc2" stroke-width="1.6"/></svg>
<div class="t" style="left:409px;top:193px;font-size:12px;line-height:12px;color:#363636;letter-spacing:0.117px;">Удалить</div>
<div class="t" style="left:401.9px;top:209px;font-size:12px;line-height:12px;color:#363636;letter-spacing:0.000px;">дубликаты</div>
<div style="left:464px;top:153px;width:59px;height:36px;background:#c6c6c6"></div>
<div style="left:464px;top:189px;width:59px;height:32px;background:#fdfdfd;border:1px solid #c6c6c6;border-top:none;box-sizing:border-box"></div>
<svg style="position:absolute;left:478px;top:159px;" width="30" height="28" viewBox="0 0 30 28"><rect x="1.5" y="5.5" width="13.5" height="5.5" fill="#fff" stroke="#666"/><rect x="1.5" y="17.5" width="13.5" height="5.5" fill="#fff" stroke="#666"/><path d="M15.5 6.5l3.8 4L27.5 1.5" fill="none" stroke="#4f9c7e" stroke-width="2.2"/><circle cx="22" cy="20.3" r="5.2" fill="none" stroke="#c9683a" stroke-width="2"/><path d="M18.5 16.8l7 7" stroke="#c9683a" stroke-width="2"/></svg>
<div class="t" style="left:465.5px;top:194px;font-size:11.8px;line-height:11.8px;color:#363636;">Проверка</div>
<div class="t" style="left:459.50px;top:210px;width:60px;text-align:center;font-size:11.8px;line-height:11.8px;color:#363636;">данных</div>
<svg style="position:absolute;left:513.5px;top:213.5px;" width="5" height="3" viewBox="0 0 5 3"><path d="M0 0h5L2.5 3z" fill="#444"/></svg>
<svg style="position:absolute;left:548px;top:157px;" width="35" height="28" viewBox="0 0 35 28"><rect x="1.5" y="1.5" width="10.5" height="25" fill="#fff" stroke="#888" stroke-width="1.1"/><path d="M1.5 6.5h10.5M1.5 11.5h10.5M1.5 16.5h10.5M1.5 21.5h10.5" stroke="#888" stroke-width="1.1"/><path d="M13 13.8h5" stroke="#3d7bc4" stroke-width="2.2"/><path d="M17 10.6l3.5 3.2-3.5 3.2z" fill="#3d7bc4"/><rect x="22.4" y="11.3" width="10.2" height="6.5" fill="#fff" stroke="#d06030" stroke-width="1.2"/><path d="M24.5 14.5h6" stroke="#999" stroke-width="0.8" stroke-dasharray="1 0.5"/></svg>
<div class="t" style="left:524px;top:192px;font-size:12px;line-height:12px;color:#363636;letter-spacing:0.000px;">Консолидация</div>
<svg style="position:absolute;left:627px;top:157px;" width="33" height="30" viewBox="0 0 33 30"><path d="M12.7 14l6.6-6M12.7 17l5 5" stroke="#b8b8b8" stroke-width="1"/><rect x="1.5" y="10.5" width="11" height="11" fill="#fafafa" stroke="#b0b0b0"/><rect x="1.5" y="10.5" width="11" height="2" fill="#b0b0b0"/><rect x="19.5" y="2.5" width="11" height="11" fill="#fafafa" stroke="#b0b0b0"/><rect x="19.5" y="2.5" width="11" height="2" fill="#b0b0b0"/><rect x="17.5" y="17.5" width="11" height="11" fill="#fafafa" stroke="#b0b0b0"/><rect x="17.5" y="17.5" width="11" height="2" fill="#b0b0b0"/><path d="M3.5 15.5h7M3.5 18h7M21.5 7.5h7M21.5 10h7M19.5 22.5h7M19.5 25h7" stroke="#c4c4c4" stroke-width="0.8" stroke-dasharray="1 0.6"/></svg>
<div class="t" style="left:610px;top:192px;font-size:12px;line-height:12px;color:#a8a8a8;letter-spacing:0.062px;">Отношения</div>
<svg style="position:absolute;left:709px;top:155px;" width="34" height="34" viewBox="0 0 34 34"><path d="M3 27V7c0-3.5 6-6 13-6s13 2.5 13 6v3L16 6 8 10v17.5z" fill="#79b82c"/><path d="M8 10.5l8-4.5 15 4.5v17.5l-15 4-8-3.5z" fill="#79b82c" stroke="#fff" stroke-width="1"/><path d="M17.5 10.5l3.5 1v3.5l-3.5-.8zM22.5 12l3 .8v3.5l-3-.6zM27 13.2l2.5.6v3.2l-2.5-.5zM17.5 16l3.5.7v4l-3.5-.5zM22.5 17l3 .6v4l-3-.4zM27 18l2.5.5v3.8l-2.5-.3zM17.5 22l3.5.4v4l-3.5-.2zM22.5 22.7l3 .3v4l-3-.1zM27 23.2l2.5.3v3.6l-2.5-.1zM17.5 27.5l3.5.1v2.6l-3.5.8zM22.5 27.6l3 .1v2l-3 .6zM27 27.8l2.5.1v1.3l-2.5.6z" fill="#fff"/><path d="M10.5 13v14" stroke="#fff" stroke-width="1.2"/><path d="M13 14.5v8.5M11.3 16.5l1.7-2 1.7 2M11.5 25h3" fill="none" stroke="#fff" stroke-width="1"/></svg>
<div class="t" style="left:693px;top:192px;font-size:12px;line-height:12px;color:#363636;letter-spacing:0.000px;">Управление</div>
<div class="t" style="left:679.6px;top:208px;font-size:12px;line-height:12px;color:#363636;letter-spacing:-0.077px;">моделью данных</div>
<div class="t" style="left:422.50px;top:228px;width:200px;text-align:center;font-size:11.8px;line-height:11.8px;color:#5e6a62;">Работа с данными</div>
<svg style="position:absolute;left:0px;top:0px;" width="783" height="646" viewBox="0 0 783 646"><defs><filter id="sh" x="-20%" y="-20%" width="140%" height="140%"><feGaussianBlur in="SourceAlpha" stdDeviation="2"/><feOffset dx="2" dy="3" result="b"/><feFlood flood-color="#000" flood-opacity="0.45"/><feComposite in2="b" operator="in"/><feMerge><feMergeNode/><feMergeNode in="SourceGraphic"/></feMerge></filter></defs><path d="M262 23.4h79v44.6h-79z" fill="none" stroke="#fc4646" stroke-width="3" filter="url(#sh)"/><polygon points="314.9,142.3 476.5,111.9 478.0,120.2 504.4,101.8 473.2,94.2 474.7,102.5 313.1,132.9" fill="#fc4646" filter="url(#sh)"/><polygon points="540.9,353.2 490.4,295.3 498.0,288.7 467.0,276.3 475.1,308.7 482.6,302.1 533.1,360.0" fill="#fc4646" filter="url(#sh)"/><polygon points="663.5,296.9 535.7,208.4 541.0,200.7 509.4,196.1 524.8,224.0 530.2,216.3 658.1,304.7" fill="#fc4646" filter="url(#sh)"/><circle cx="239" cy="45" r="38" fill="#0aab8b" filter="url(#sh)"/><circle cx="314.2" cy="140.2" r="38" fill="#0aab8b" filter="url(#sh)"/><circle cx="539" cy="356.6" r="38" fill="#0aab8b" filter="url(#sh)"/><circle cx="660.8" cy="300.8" r="38" fill="#0aab8b" filter="url(#sh)"/></svg>
<svg style="position:absolute;left:0px;top:0px;" width="783" height="646" viewBox="0 0 783 646"><text x="238.6" y="65.3" text-anchor="middle" font-family="Liberation Sans" font-size="54" fill="#fff" stroke="#fff" stroke-width="0.9">2</text><text x="314.2" y="159" text-anchor="middle" font-family="Liberation Sans" font-size="54" fill="#fff" stroke="#fff" stroke-width="0.9">3</text><text x="659.8" y="320.9" text-anchor="middle" font-family="Liberation Sans" font-size="54" fill="#fff" stroke="#fff" stroke-width="0.9">4</text><path d="M545.6 337.4V377.4H540V345.2L528.6 351.8V346.2L539.8 337.4Z" fill="#fff"/></svg>
<svg style="position:absolute;left:20px;top:573px;" width="62" height="54" viewBox="0 0 62 54"><rect x="2.5" y="2" width="57" height="46" rx="5" fill="rgba(255,255,255,0.3)" stroke="rgba(150,150,150,0.5)" stroke-width="1"/><rect x="6.2" y="5.2" width="49.6" height="39.6" rx="3.5" fill="rgba(255,255,255,0.25)" stroke="rgba(150,150,150,0.6)" stroke-width="2.4"/><path d="M30.5 29.5L17 16" stroke="rgba(140,140,140,0.65)" stroke-width="3"/><path d="M10 9l15.5 4-11 11z" fill="rgba(150,150,150,0.6)"/><path d="M12 33.5l-2.5 3 2.5 3zM42 33.5l2.5 3-2.5 3z" fill="rgba(180,180,180,0.4)"/><path d="M20.5 48.5v2.5h17.5v-2.5" fill="rgba(255,255,255,0.5)" stroke="rgba(150,150,150,0.5)" stroke-width="1"/></svg>
<svg style="position:absolute;left:80px;top:575px;" width="180" height="45" viewBox="0 0 180 45"><g font-family="Liberation Sans" font-weight="bold" font-size="28" stroke-linejoin="round" paint-order="stroke"><text x="7" y="33" letter-spacing="5" fill="rgba(250,205,195,0.6)" stroke="rgba(240,150,135,0.5)" stroke-width="3">OS</text><text x="63.5" y="33" letter-spacing="4.3" fill="rgba(245,245,245,0.6)" stroke="rgba(160,160,160,0.5)" stroke-width="3">Helper</text></g></svg>
</body></html>
